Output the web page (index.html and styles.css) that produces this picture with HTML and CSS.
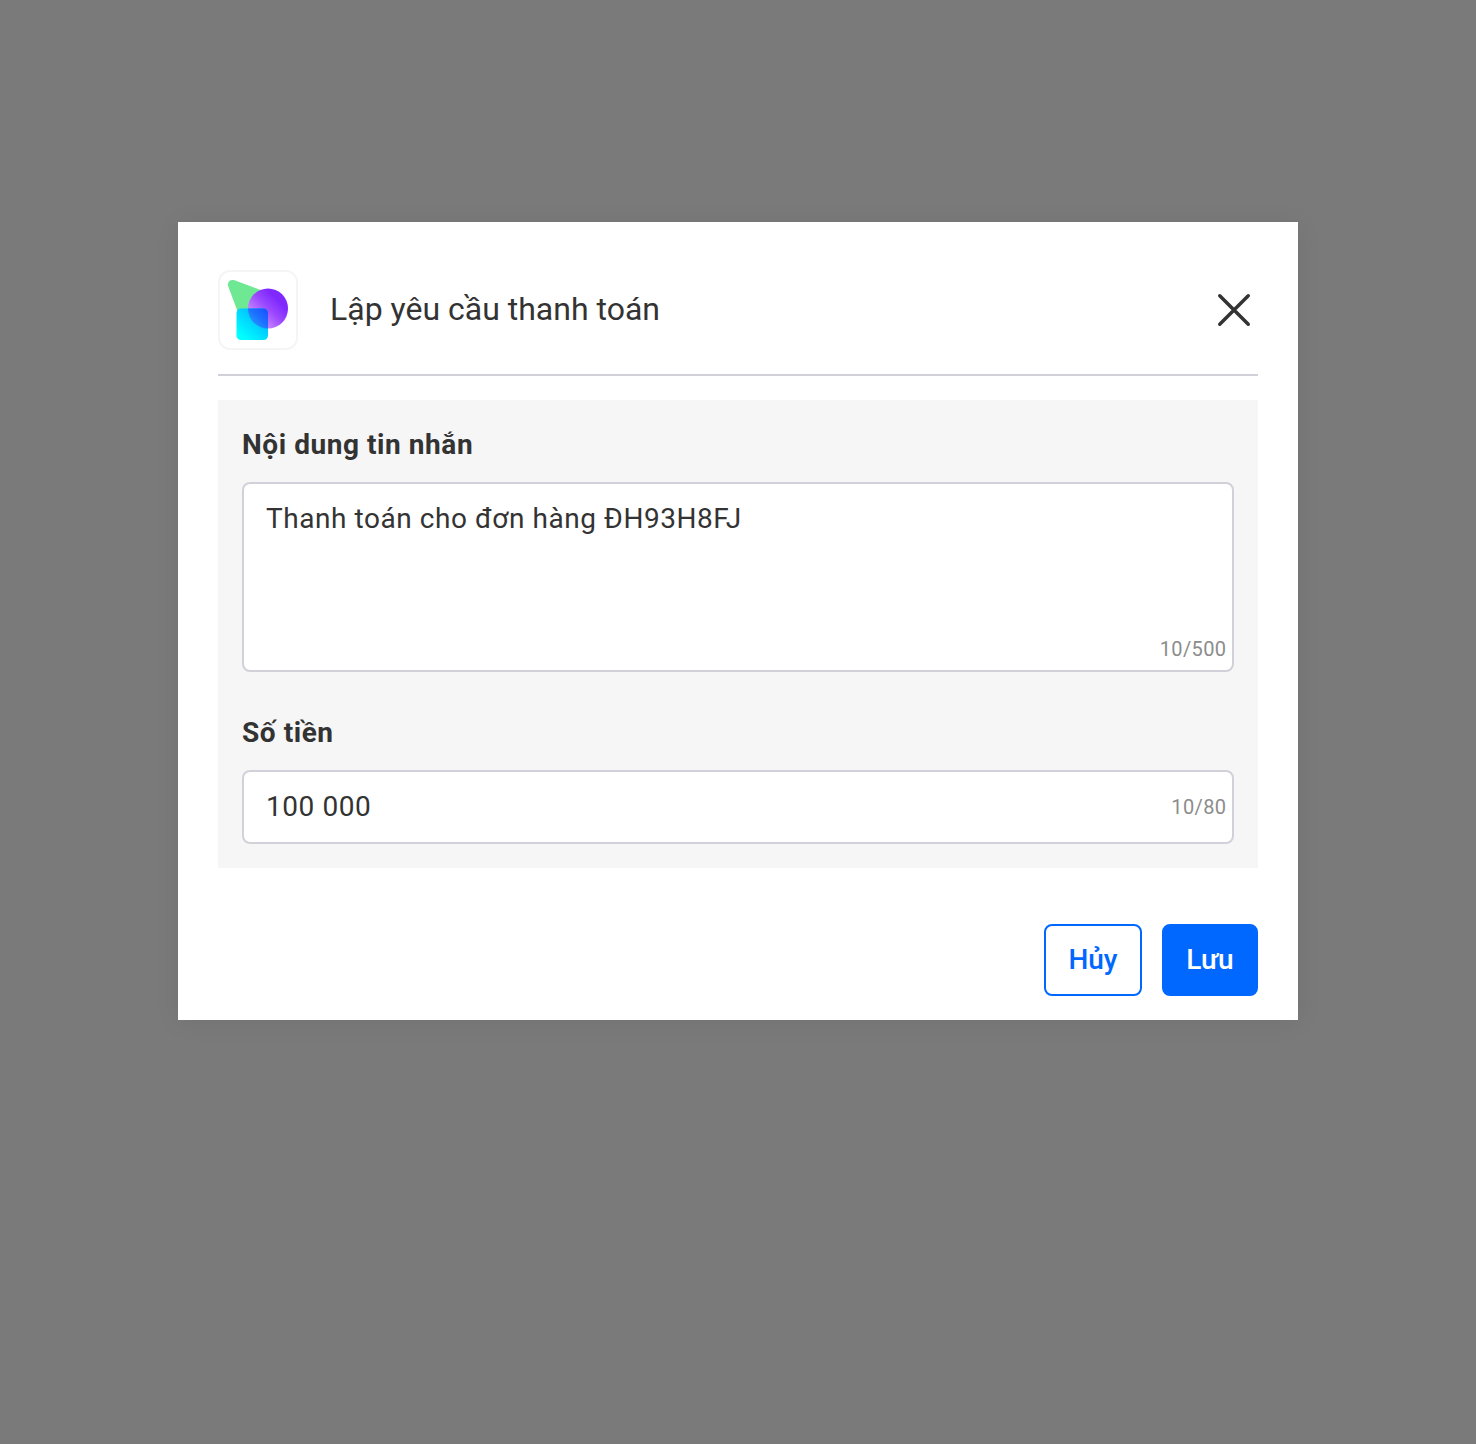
FILE: index.html
```html
<!DOCTYPE html>
<html lang="vi">
<head>
<meta charset="utf-8">
<title>Lập yêu cầu thanh toán</title>
<link rel="stylesheet" href="styles.css">
</head>
<body>
<main class="dialog">
  <header class="header">
    <svg class="logo" viewBox="0 0 80 80">
      <defs>
        <linearGradient id="violet" x1="1" y1="0.1" x2="0.1" y2="1"><stop offset=".25" stop-color="#8029ff"/><stop offset=".5" stop-color="#9d4aff"/><stop offset=".88" stop-color="#d79cff"/></linearGradient>
        <linearGradient id="cyan" x1="1" y1="0" x2="0.1" y2="1"><stop offset="0" stop-color="#00a0ff"/><stop offset=".9" stop-color="#00ffff"/></linearGradient>
        <linearGradient id="blue" gradientUnits="userSpaceOnUse" x1="50" y1="38" x2="32" y2="56"><stop offset="0" stop-color="#1a4cff"/><stop offset=".5" stop-color="#1c70ff"/><stop offset="1" stop-color="#28a0ff"/></linearGradient>
        <clipPath id="square"><rect x="18.500" y="38.500" width="31.500" height="31.500" rx="4.500"/></clipPath>
      </defs>
      <rect x="1" y="1" width="78" height="78" rx="11" fill="#fff" stroke="#f5f5f5" stroke-width="2"/>
      <path d="M10.300 16.500C8.700 12.200 12.200 8.800 16.500 10.300L44 20.500L32 50L22 48Z" fill="#6fe894"/>
      <circle cx="50" cy="38.500" r="20" fill="url(#violet)"/>
      <rect x="18.500" y="38.500" width="31.500" height="31.500" rx="4.500" fill="url(#cyan)"/>
      <circle cx="50" cy="38.500" r="20" fill="url(#blue)" clip-path="url(#square)"/>
    </svg>
    <h1 class="title">Lập yêu cầu thanh toán</h1>
    <button class="close" aria-label="Đóng"><svg viewBox="0 0 48 48"><path d="M9.750 9.750L38.250 38.250M38.250 9.750L9.750 38.250"/></svg></button>
  </header>
  <section class="form">
    <h2 class="label">Nội dung tin nhắn</h2>
    <div class="field message"><span class="value">Thanh toán cho đơn hàng ĐH93H8FJ</span><span class="count">10/500</span></div>
    <h2 class="label amount-label">Số tiền</h2>
    <div class="field amount"><span class="value">100 000</span><span class="count">10/80</span></div>
  </section>
  <footer class="actions"><button class="button cancel">Hủy</button><button class="button save">Lưu</button></footer>
</main>
</body>
</html>
```
FILE: styles.css
```css
* { box-sizing: border-box; }
body { margin: 0; height: 1444px; padding-top: 222px; background: #7a7a7a; font-family: Roboto, sans-serif; color: #333; }
.dialog { width: 1120px; height: 798px; margin: 0 auto; padding: 48px 40px 24px; background: #fff; box-shadow: 0 2px 24px rgba(0,0,0,.07); }
.header { display: flex; height: 106px; align-items: flex-start; border-bottom: 2px solid #d2d1d9; }
.logo { width: 80px; height: 80px; }
.title { margin: 0 auto 0 32px; line-height: 78px; font-size: 32px; font-weight: 400; }
.close { width: 48px; height: 48px; margin-top: 16px; padding: 0; border: 0; background: none; }
.close svg { display: block; width: 48px; height: 48px; fill: none; stroke: #333; stroke-width: 3.500; stroke-linecap: round; }
.form { height: 468px; margin-top: 24px; padding: 25px 24px 24px; background: #f6f6f6; }
.label { margin: 0 0 17px; height: 40px; line-height: 40px; font-size: 28px; font-weight: 700; letter-spacing: .56px; }
.amount-label { margin-top: 41px; }
.field { display: flex; justify-content: space-between; padding: 0 5.500px 0 22px; border: 2px solid #d2d1d9; border-radius: 8px; background: #fff; }
.message { height: 190px; }
.amount { height: 74px; }
.value { line-height: 70px; font-size: 28px; letter-spacing: .56px; }
.count { line-height: 70px; font-size: 20px; letter-spacing: .4px; color: #8c8c8c; }
.message .count { align-self: flex-end; line-height: 42px; }
.actions { display: flex; justify-content: flex-end; gap: 20px; margin-top: 56px; }
.button { height: 72px; padding: 0 0 2px; border: 2px solid #0068ff; border-radius: 8px; font: 500 28px Roboto, sans-serif; }
.cancel { width: 98px; background: #fff; color: #0068ff; }
.save { width: 96px; background: #0068ff; color: #fff; }
```
